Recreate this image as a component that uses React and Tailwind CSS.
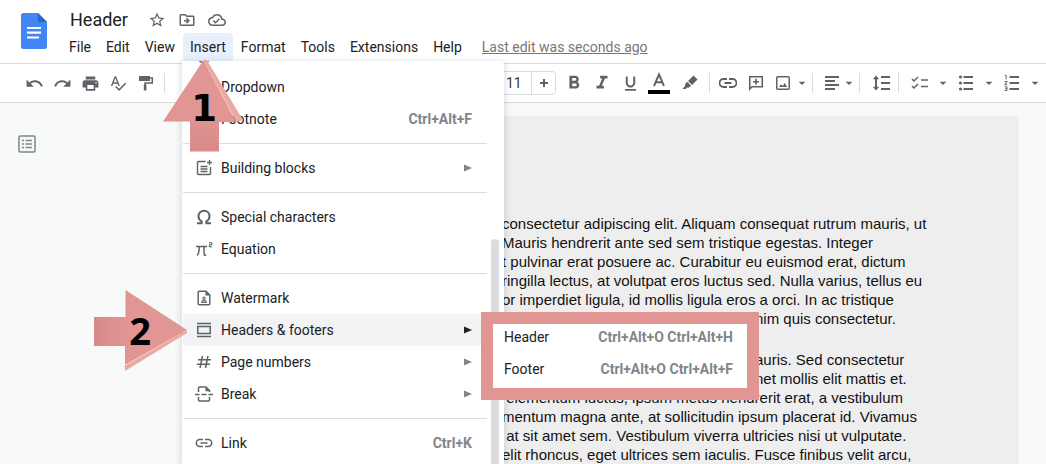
import React from "react";
import {
  MdUndo, MdRedo, MdPrint, MdFormatBold, MdFormatItalic, MdFormatUnderlined,
  MdArrowDropDown, MdStarBorder, MdOutlineDriveFileMove,
  MdOutlineCloudDone, MdSpellcheck,
} from "react-icons/md";

const Svg = ({ size = 18, children }) => (
  <svg width={size} height={size} viewBox="0 0 18 18" fill="none" stroke="currentColor" strokeWidth="1.5" aria-hidden="true">
    {children}
  </svg>
);

const PaintIcon = () => (
  <Svg>
    <path d="M2 2h11v5H2z" fill="currentColor" stroke="none" />
    <path d="M13 4h2.300v5H8v3" />
    <path d="M6.800 10.500h2.600v6H6.800z" fill="currentColor" stroke="none" />
  </Svg>
);
const PlusIcon = () => (
  <Svg>
    <path d="M9 5v8M5 9h8" strokeWidth="2" />
  </Svg>
);
const HighlighterIcon = () => (
  <Svg>
    <path d="M12.500 1.500l4 4-5.500 5.500-4-4zM6.200 7.800l4 4-2.700 2-1.200-.3-1.500 1.500H1.500l2.700-3.300-.2-1.400z" fill="currentColor" stroke="none" />
  </Svg>
);
const LinkIcon = () => (
  <Svg>
    <path d="M8 5H4.500a4 4 0 0 0 0 8H8M10 5h3.500a4 4 0 0 1 0 8H10M5.500 9h7" strokeWidth="1.900" />
  </Svg>
);
const ThinLinkIcon = () => (
  <Svg>
    <path d="M8 5.500H4.800a3.500 3.500 0 0 0 0 7H8M10 5.500h3.200a3.500 3.500 0 0 1 0 7H10M5.500 9h7" strokeWidth="1.500" />
  </Svg>
);
const CommentIcon = () => (
  <Svg>
    <path d="M2.750 2.750h12.500v10H5l-2.250 2.250zM9 4.800v6M6 7.800h6" strokeWidth="1.600" />
  </Svg>
);
const ImageIcon = () => (
  <Svg>
    <rect x="2.750" y="2.750" width="12.500" height="12.500" rx="1" />
    <path d="M5 13l2-2.800 1.600 1.800 2.200-3L13.200 13z" fill="currentColor" stroke="none" />
  </Svg>
);
const AlignIcon = () => (
  <Svg>
    <path d="M2 3h14M2 7h10M2 11h14M2 15h10" strokeWidth="2" />
  </Svg>
);
const SpacingIcon = () => (
  <Svg>
    <path d="M9 3h9M9 9h9M9 15h9M4 4v10" strokeWidth="2" />
    <path d="M4 1.500L7.200 5.200H.8zM4 16.500l3.200-3.700H.8z" fill="currentColor" stroke="none" />
  </Svg>
);
const ChecklistIcon = () => (
  <Svg>
    <path d="M1 5l2 2 4-4M1 12l2 2 4-4M10 6h7M10 12.500h7" />
  </Svg>
);
const BulletsIcon = () => (
  <Svg>
    <path d="M6.500 3H16M6.500 9H16M6.500 15H16" strokeWidth="2" />
    <g fill="currentColor" stroke="none">
      <circle cx="3.500" cy="3" r="1.600" />
      <circle cx="3.500" cy="9" r="1.600" />
      <circle cx="3.500" cy="15" r="1.600" />
    </g>
  </Svg>
);
const NumbersIcon = () => (
  <Svg>
    <path d="M6.500 3H16M6.500 9H16M6.500 15H16" strokeWidth="2" />
    <path d="M1.800 1.500h1.400v3.800M1.500 7.500h2.700L1.800 10.700h2.500M1.500 12.800h2.500v3.700H1.500M2.200 14.600h1.800" strokeWidth="1" />
  </Svg>
);
const OutlineIcon = () => (
  <Svg>
    <rect x="1" y="1" width="16" height="16" rx="1.500" />
    <path d="M4 5.500h2M7.500 5.500h6.500M4 9h2M7.500 9h6.500M4 12.500h2M7.500 12.500h6.500" />
  </Svg>
);
const ChipIcon = () => (
  <Svg>
    <circle cx="9" cy="9" r="7.500" />
  </Svg>
);
const BlocksIcon = () => (
  <Svg>
    <path d="M10.500 2.500H3.500a1 1 0 0 0-1 1v11a1 1 0 0 0 1 1h11a1 1 0 0 0 1-1V8M14.500 1v5M12 3.500h5M5.500 7.500h7M5.500 10h7M5.500 12.500h7" strokeWidth="1.400" />
  </Svg>
);
const OmegaIcon = () => (
  <Svg>
    <path d="M2 15.200h4.700v-1.900C4.700 12.300 3.500 10.500 3.500 8.200 3.500 5 6 2.800 9 2.800s5.500 2.200 5.500 5.400c0 2.300-1.200 4.100-3.200 5.100v1.900H16" strokeWidth="2" />
  </Svg>
);
const EquationIcon = () => (
  <Svg>
    <path d="M1 6.500h11M4.300 6.500c0 4-.3 6.500-2 9M9 6.500v7c0 1.500 1 2 2.300 1.400" />
    <path d="M14 2.700h2.700v2H14.500v2.100h2.700" strokeWidth="1.100" />
  </Svg>
);
const WatermarkIcon = () => (
  <Svg>
    <path d="M11 2.200H4.200a1 1 0 0 0-1 1v11.600a1 1 0 0 0 1 1h9.600a1 1 0 0 0 1-1V6z" />
    <path d="M10.500 2v4.500h4.500z" fill="currentColor" stroke="none" />
    <circle cx="9" cy="9.200" r="1.200" strokeWidth="1.100" />
    <path d="M6.800 13.400c0-2.500 4.400-2.500 4.400 0z" strokeWidth="1.100" />
  </Svg>
);
const HeadersIcon = () => (
  <Svg>
    <path d="M2 2.500h14M2 15.500h14" />
    <rect x="2.750" y="5.500" width="12.500" height="7" />
  </Svg>
);
const HashIcon = () => (
  <Svg>
    <path d="M7.500 3l-2.500 12M13 3l-2.500 12M3 6.700h13M2 11.300h13" />
  </Svg>
);
const BreakIcon = () => (
  <Svg>
    <path d="M3.500 7V3a1 1 0 0 1 1-1h6.500l3.500 3.500V7M3.500 12v3a1 1 0 0 0 1 1h9a1 1 0 0 0 1-1v-3" />
    <path d="M10.500 2v4.200h4.500z" fill="currentColor" stroke="none" />
    <path d="M0 9.500h4.500M6.500 9.500h5M13.500 9.500H18" />
  </Svg>
);

const DocsLogo = () => (
  <svg width="26" height="36" viewBox="0 0 26 36" role="img" aria-label="Docs">
    <path d="M2.500 0H17l9 9v24.500a2.500 2.500 0 0 1-2.500 2.500h-21A2.500 2.500 0 0 1 0 33.500v-31A2.500 2.500 0 0 1 2.500 0z" fill="#4285f4" />
    <path d="M17 0l9 9h-9z" fill="#2a68c8" />
    <path d="M6 15h14M6 19.700h14M6 24.500h12" stroke="#fff" strokeWidth="2.200" />
  </svg>
);

const menus = ["File", "Edit", "View", "Insert", "Format", "Tools", "Extensions", "Help"];

const menuItems = [
  { label: "", name: "Smart chips", icon: ChipIcon },
  { label: "Dropdown" },
  { label: "Footnote", keys: "Ctrl+Alt+F" },
  null,
  { label: "Building blocks", icon: BlocksIcon, sub: true },
  null,
  { label: "Special characters", icon: OmegaIcon },
  { label: "Equation", icon: EquationIcon },
  null,
  { label: "Watermark", icon: WatermarkIcon },
  { label: "Headers & footers", icon: HeadersIcon, sub: true, active: true },
  { label: "Page numbers", icon: HashIcon, sub: true },
  { label: "Break", icon: BreakIcon, sub: true },
  null,
  { label: "Link", icon: ThinLinkIcon, keys: "Ctrl+K" },
];

const paragraphs = [
  [
    { text: "consectetur adipiscing elit. Aliquam consequat rutrum mauris, ut" },
    { text: "Mauris hendrerit ante sed sem tristique egestas. Integer" },
    { text: "t pulvinar erat posuere ac. Curabitur eu euismod erat, dictum" },
    { text: "ringilla lectus, at volutpat eros luctus sed. Nulla varius, tellus eu" },
    { text: "or imperdiet ligula, id mollis ligula eros a orci. In ac tristique" },
    { text: "nim quis consectetur.", covered: true },
  ],
  [
    { text: "auris. Sed consectetur", covered: true },
    { text: "net mollis elit mattis et.", covered: true },
    { text: " elementum luctus, ipsum metus hendrerit erat, a vestibulum" },
    { text: "mentum magna ante, at sollicitudin ipsum placerat id. Vivamus" },
    { text: " at sit amet sem. Vestibulum viverra ultricies nisi ut vulputate." },
    { text: "elit rhoncus, eget ultrices sem iaculis. Fusce finibus velit arcu," },
  ],
];

function Tool({ label, width = "w-7", children }) {
  return (
    <button type="button" aria-label={label} className={`flex h-7 shrink-0 items-center justify-center ${width}`}>
      {children}
    </button>
  );
}

const Divider = ({ space }) => <span className={`h-5 w-px shrink-0 bg-[#dadce0] ${space}`} />;

function Toolbar() {
  return (
    <div role="toolbar" aria-label="Formatting" className="flex h-10 items-center overflow-hidden border-y border-[#dadce0] bg-white pl-5 text-[#5f6368]">
      <Tool label="Undo"><MdUndo size={19} /></Tool>
      <Tool label="Redo"><MdRedo size={19} /></Tool>
      <Tool label="Print"><MdPrint size={19} /></Tool>
      <Tool label="Spelling check"><MdSpellcheck size={18} /></Tool>
      <Tool label="Paint format"><PaintIcon /></Tool>
      <Divider space="ml-1 mr-[316px]" />
      <div className="flex h-6 w-[75px] shrink-0 rounded-sm border border-[#dadce0]">
        <input aria-label="Font size" defaultValue="11" className="w-[50px] border-r border-[#dadce0] pl-6 text-sm text-[#3c4043]" />
        <button type="button" aria-label="Increase font size" className="flex flex-1 items-center justify-center">
          <PlusIcon />
        </button>
      </div>
      <span className="w-1 shrink-0" />
      <Tool label="Bold"><MdFormatBold size={22} /></Tool>
      <Tool label="Italic"><MdFormatItalic size={22} /></Tool>
      <Tool label="Underline"><MdFormatUnderlined size={19} /></Tool>
      <Tool label="Text color" width="w-[30px]">
        <svg width="22" height="22" viewBox="0 0 22 22" fill="none" aria-hidden="true">
          <path d="M6 14L11 2.500 16 14M7.800 10.300h6.400" stroke="currentColor" strokeWidth="1.900" />
          <path d="M0 18h22v4H0z" fill="#000" />
        </svg>
      </Tool>
      <Tool label="Highlight color" width="w-[31px]"><HighlighterIcon /></Tool>
      <Divider space="mx-1" />
      <Tool label="Insert link"><LinkIcon /></Tool>
      <Tool label="Add comment"><CommentIcon /></Tool>
      <Tool label="Insert image" width="w-[26px]"><ImageIcon /></Tool>
      <Tool label="Image options" width="w-3"><MdArrowDropDown size={16} className="shrink-0" /></Tool>
      <Divider space="ml-1 mr-2" />
      <Tool label="Align" width="w-[22px]"><AlignIcon /></Tool>
      <Tool label="Align options" width="w-3"><MdArrowDropDown size={16} className="shrink-0" /></Tool>
      <Divider space="ml-1 mr-2" />
      <Tool label="Line spacing" width="w-[26px]"><SpacingIcon /></Tool>
      <Divider space="ml-1 mr-2" />
      <Tool label="Checklist" width="w-[26px]"><ChecklistIcon /></Tool>
      <Tool label="Checklist options" width="w-5"><MdArrowDropDown size={16} /></Tool>
      <Tool label="Bulleted list" width="w-[26px]"><BulletsIcon /></Tool>
      <Tool label="Bulleted list options" width="w-5"><MdArrowDropDown size={16} /></Tool>
      <Tool label="Numbered list" width="w-[26px]"><NumbersIcon /></Tool>
      <Tool label="Numbered list options" width="w-5"><MdArrowDropDown size={16} /></Tool>
    </div>
  );
}

function InsertMenu() {
  return (
    <div className="absolute top-full -left-px h-[calc(100vh-61px)] w-[322px] overflow-hidden rounded-tr-sm bg-white pr-[17px] pl-px shadow-[0_2px_6px_2px_rgba(60,64,67,0.15)]">
      <div role="menu" className="-mt-[22px]">
        {menuItems.map((item, i) => {
          if (!item) return <div key={i} role="separator" className="my-2 h-px bg-[#dadce0]" />;
          const Icon = item.icon;
          return (
            <button
              key={i}
              type="button"
              role="menuitem"
              aria-label={item.name}
              className={`flex h-8 w-full items-center pr-[15px] pl-3 text-left text-sm text-[#202124] ${item.active ? "bg-[#f1f3f4]" : ""}`}
            >
              <span className="mr-2 flex w-[18px] justify-center text-[#5f6368]">{Icon && <Icon size={18} />}</span>
              <span className="flex-1">{item.label}</span>
              {item.keys && <span className="font-bold text-[#80868b]">{item.keys}</span>}
              {item.sub && (
                <svg width="8" height="8" viewBox="0 0 8 8" className={item.active ? "fill-[#202124]" : "fill-[#80868b]"} aria-hidden="true">
                  <path d="M0 .5l8 3.500-8 3.500z" />
                </svg>
              )}
            </button>
          );
        })}
      </div>
      <span className="absolute top-[178px] right-[5px] bottom-0 w-2 rounded-t-full bg-[#dadce0]" />
    </div>
  );
}

function Submenu() {
  const rows = [["Header", "Ctrl+Alt+O Ctrl+Alt+H"], ["Footer", "Ctrl+Alt+O Ctrl+Alt+F"]];
  return (
    <div role="menu" aria-label="Headers & footers" className="absolute top-[312px] left-[481px] w-[278px] border-12 border-[#e29694] bg-white">
      {rows.map(([label, keys]) => (
        <button key={label} type="button" role="menuitem" className="flex h-8 w-full items-center justify-between pr-[14px] pb-[6px] pl-[11px] text-sm text-[#202124]">
          <span>{label}</span>
          <span className="font-bold text-[#80868b]">{keys}</span>
        </button>
      ))}
    </div>
  );
}

function ArrowOne() {
  return (
    <svg width="82" height="94" viewBox="0 0 82 94" className="absolute top-[59px] left-[162px]" role="img" aria-label="Step 1">
      <defs>
        <linearGradient id="a1" x1="0" y1="0" x2="0" y2="1">
          <stop offset="0.600" stopColor="#e29694" />
          <stop offset="1" stopColor="#d88a88" />
        </linearGradient>
      </defs>
      <path d="M41.500 1L1 62.500h27V92.500h29V63h17z" fill="url(#a1)" />
      <path d="M41.500 1l3-.5L81 61l-6.500 2z" fill="#eba9a4" />
      <text x="42" y="62" textAnchor="middle" className="fill-black font-['DejaVu_Sans',sans-serif] text-[37px] font-bold">1</text>
    </svg>
  );
}

function ArrowTwo() {
  return (
    <svg width="94" height="82" viewBox="0 0 94 82" className="absolute top-[290px] left-[94px]" role="img" aria-label="Step 2">
      <defs>
        <linearGradient id="a2" x1="1" y1="0" x2="0" y2="0">
          <stop offset="0.600" stopColor="#e29694" />
          <stop offset="1" stopColor="#d88a88" />
        </linearGradient>
      </defs>
      <path d="M93 40L31.500 0v27H0v29h31v19z" fill="url(#a2)" />
      <path d="M93 40v3L31 81l-.5-5z" fill="#eba9a4" />
      <text x="46" y="55" textAnchor="middle" className="fill-black font-['Open_Sans',sans-serif] text-[38px] font-bold">2</text>
    </svg>
  );
}

export default function App() {
  return (
    <div className="relative flex h-screen flex-col overflow-hidden bg-[#f8faf9] font-[Roboto,sans-serif]">
      <header className="flex h-[63px] shrink-0 bg-white pl-[21px]">
        <div className="pt-[13px]"><DocsLogo /></div>
        <div className="flex min-w-0 flex-1 flex-col pt-[7px] pl-[15px]">
          <div className="flex h-[26px] items-center pl-2 text-[#5f6368]">
            <h1 className="mr-5 text-lg leading-6 text-[#202124]">Header</h1>
            <div className="flex gap-3">
              <button type="button" aria-label="Star"><MdStarBorder size={18} /></button>
              <button type="button" aria-label="Move"><MdOutlineDriveFileMove size={18} /></button>
              <button type="button" aria-label="Document status"><MdOutlineCloudDone size={18} /></button>
            </div>
          </div>
          <nav className="flex h-7 gap-px text-sm text-[#202124]">
            {menus.map((name) => (
              <div key={name} className="relative z-10 shrink-0">
                <button type="button" className={`h-7 rounded-t-sm px-[7px] ${name === "Insert" ? "bg-[#e8f0fe]" : ""}`}>
                  {name}
                </button>
                {name === "Insert" && <InsertMenu />}
              </div>
            ))}
            <a href="#history" className="ml-3 shrink-0 self-center text-[#777] underline">Last edit was seconds ago</a>
          </nav>
        </div>
      </header>
      <Toolbar />
      <main className="flex min-h-0 flex-1 overflow-hidden pr-[29px]">
        <aside className="w-[201px] shrink-0 pt-8 pl-[18px] text-[#80868b]">
          <button type="button" aria-label="Show document outline"><OutlineIcon /></button>
        </aside>
        <article className="mt-[15px] h-[1056px] min-w-0 flex-1 bg-[#eeeeee] pt-24 pl-[301px] font-['Liberation_Sans',Arial,sans-serif] text-[15px] leading-[19px] whitespace-pre text-[#111] shadow-[0_0_3px_rgba(60,64,67,0.2)]">
          {paragraphs.map((lines, i) => (
            <p key={i} className="mb-[22px]">
              {lines.map(({ text, covered }) => (
                <span key={text} className={covered ? "block pl-[253px]" : "block"}>{text}</span>
              ))}
            </p>
          ))}
        </article>
      </main>
      <div className="absolute inset-0 z-20">
        <Submenu />
        <ArrowOne />
        <ArrowTwo />
      </div>
    </div>
  );
}
